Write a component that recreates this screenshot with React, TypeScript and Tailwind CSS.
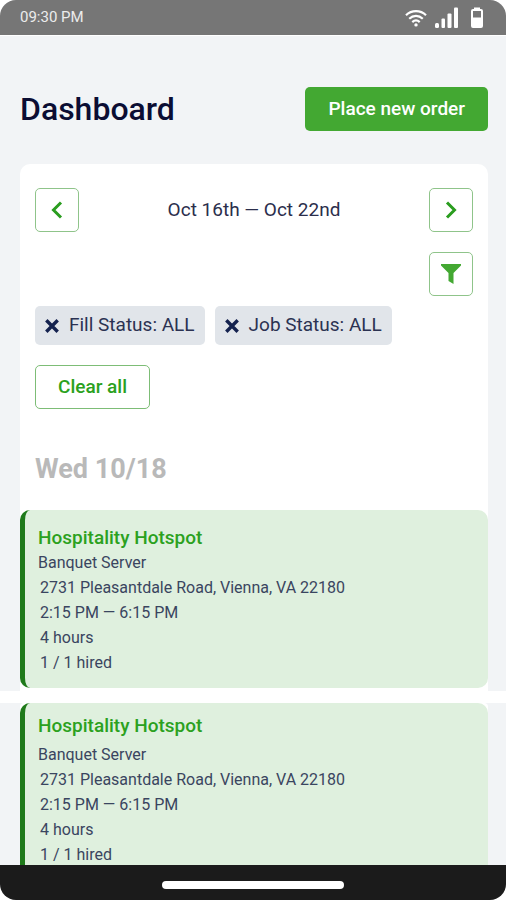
import { clsx } from "clsx";

type Shift = {
  company: string;
  role: string;
  address: string;
  time: string;
  duration: string;
  hired: string;
};

const shift: Shift = {
  company: "Hospitality Hotspot",
  role: "Banquet Server",
  address: "2731 Pleasantdale Road, Vienna, VA 22180",
  time: "2:15 PM — 6:15 PM",
  duration: "4 hours",
  hired: "1 / 1 hired",
};

const iconButton =
  "flex size-11 items-center justify-center rounded-[5px] border border-[#8fc48a] bg-white text-[#2a9d1f]";

function StatusBar() {
  return (
    <header className="flex h-9 shrink-0 items-center justify-between rounded-t-2xl border-b border-white bg-[#767676] pr-[22px] pl-5 text-white">
      <span className="text-[15px] text-[#ececec]">09:30 PM</span>
      <div className="flex items-center gap-2">
        <svg width="22" height="20" viewBox="0 0 22 20" fill="none" stroke="currentColor" strokeWidth="2.2" aria-hidden="true">
          <path d="M1 7.2c5.6-5.4 14.400-5.400 20 0" />
          <path d="M4.200 10.800c4-3.800 9.600-3.800 13.600 0" />
          <path d="M7.300 14.100c2.300-2.200 5.100-2.200 7.400 0" />
          <circle cx="11" cy="16.900" r="1.700" fill="currentColor" stroke="none" />
        </svg>
        <svg width="23" height="22" viewBox="0 0 23 22" fill="currentColor" aria-hidden="true">
          <rect x="0" y="16" width="4" height="5" rx="1.500" />
          <rect x="6.500" y="11.500" width="3.500" height="9.500" rx="1" />
          <rect x="12.500" y="6.500" width="4" height="14.500" rx="1" />
          <rect x="19" y="0.500" width="4" height="20.500" rx="1" />
        </svg>
        <svg className="ml-1" width="14" height="22" viewBox="0 0 14 22" aria-hidden="true">
          <path d="M4 .5h6v1.500h1a2 2 0 0 1 2 2v15a2 2 0 0 1-2 2H3a2 2 0 0 1-2-2V4a2 2 0 0 1 2-2h1z" fill="currentColor" />
          <rect x="3" y="4" width="8" height="6.500" fill="#767676" />
        </svg>
      </div>
    </header>
  );
}

function Chevron({ direction }: { direction: "left" | "right" }) {
  return (
    <svg width="12" height="18" viewBox="0 0 12 18" fill="none" stroke="currentColor" strokeWidth="3" aria-hidden="true">
      <path d={direction === "left" ? "M10 1.500 2.500 9l7.500 7.500" : "M2 1.500 9.500 9 2 16.500"} />
    </svg>
  );
}

function FilterChip({ label }: { label: string }) {
  return (
    <button type="button" className="flex h-[39px] items-center gap-[10px] rounded-[5px] bg-[#e1e5ea] px-[10px] text-[19px] text-[#2b3252]">
      <svg width="14" height="14" viewBox="0 0 14 14" stroke="#14224f" strokeWidth="3.400" aria-hidden="true">
        <path d="M1.300 1.300 12.700 12.700M12.700 1.300 1.300 12.700" />
      </svg>
      {label}
    </button>
  );
}

function ShiftCard({ data, spaced = false }: { data: Shift; spaced?: boolean }) {
  return (
    <article
      className={clsx(
        "rounded-[10px] border-l-[5px] border-[#1f7a1a] bg-[#dff0de] pr-3 pb-[13px] pl-[13px] text-base leading-[25px] text-[#3a4560]",
        spaced ? "pt-[11px]" : "pt-4",
      )}
    >
      <h3 className="text-[19px] leading-6 font-medium text-[#2ba120]">{data.company}</h3>
      <p className={clsx(spaced && "mt-1")}>{data.role}</p>
      <div className="pl-0.5">
        <p>{data.address}</p>
        <p>{data.time}</p>
        <p>{data.duration}</p>
        <p>{data.hired}</p>
      </div>
    </article>
  );
}

export default function App() {
  return (
    <div className="flex h-screen flex-col bg-white font-[Roboto,sans-serif]">
      <StatusBar />
      <main className="min-h-0 flex-1 overflow-y-auto bg-white [scrollbar-width:none]">
        <section className="bg-[#f2f4f6] pr-[18px] pl-5">
          <div className="flex items-center justify-between pt-[51px] pb-[33px]">
            <h1 className="text-[32px] leading-10 font-medium text-[#0b0d33]">Dashboard</h1>
            <button type="button" className="h-11 rounded-[5px] bg-[#43a832] px-[23px] text-[19px] font-medium text-white">
              Place new order
            </button>
          </div>
          <div className="rounded-t-[10px] bg-white pb-[3px]">
            <div className="px-[15px] pt-6">
              <div className="flex items-center justify-between">
                <button type="button" aria-label="Previous week" className={iconButton}>
                  <Chevron direction="left" />
                </button>
                <p className="text-[19px] text-[#2b2e4c]">Oct 16th — Oct 22nd</p>
                <button type="button" aria-label="Next week" className={iconButton}>
                  <Chevron direction="right" />
                </button>
              </div>
              <div className="mt-5 flex justify-end">
                <button type="button" aria-label="Filter" className={iconButton}>
                  <svg width="20" height="20" viewBox="0 0 20 20" fill="#43a832" aria-hidden="true">
                    <path d="M0 0h20v1.500L12.500 9v11L7.500 17V9L0 1.500z" />
                  </svg>
                </button>
              </div>
              <div className="mt-[10px] flex flex-wrap gap-[10px]">
                <FilterChip label="Fill Status: ALL" />
                <FilterChip label="Job Status: ALL" />
              </div>
              <button type="button" className="mt-5 h-11 rounded-[5px] border border-[#7dbd76] px-[22px] text-[19px] font-medium text-[#2ba120]">
                Clear all
              </button>
              <h2 className="mt-11 pb-[25px] text-[27px] leading-8 font-bold text-[#b9b9b9]">Wed 10/18</h2>
            </div>
            <ShiftCard data={shift} />
          </div>
        </section>
        <section className="mt-3 bg-[#f2f4f6] pr-[18px] pl-5">
          <div className="rounded-t-sm bg-white">
            <ShiftCard data={shift} spaced />
          </div>
        </section>
      </main>
      <footer className="flex h-[35px] shrink-0 items-center justify-center rounded-b-2xl bg-[#1b1b1b] pt-1">
        <div className="h-2 w-[36%] rounded-full bg-white" />
      </footer>
    </div>
  );
}
